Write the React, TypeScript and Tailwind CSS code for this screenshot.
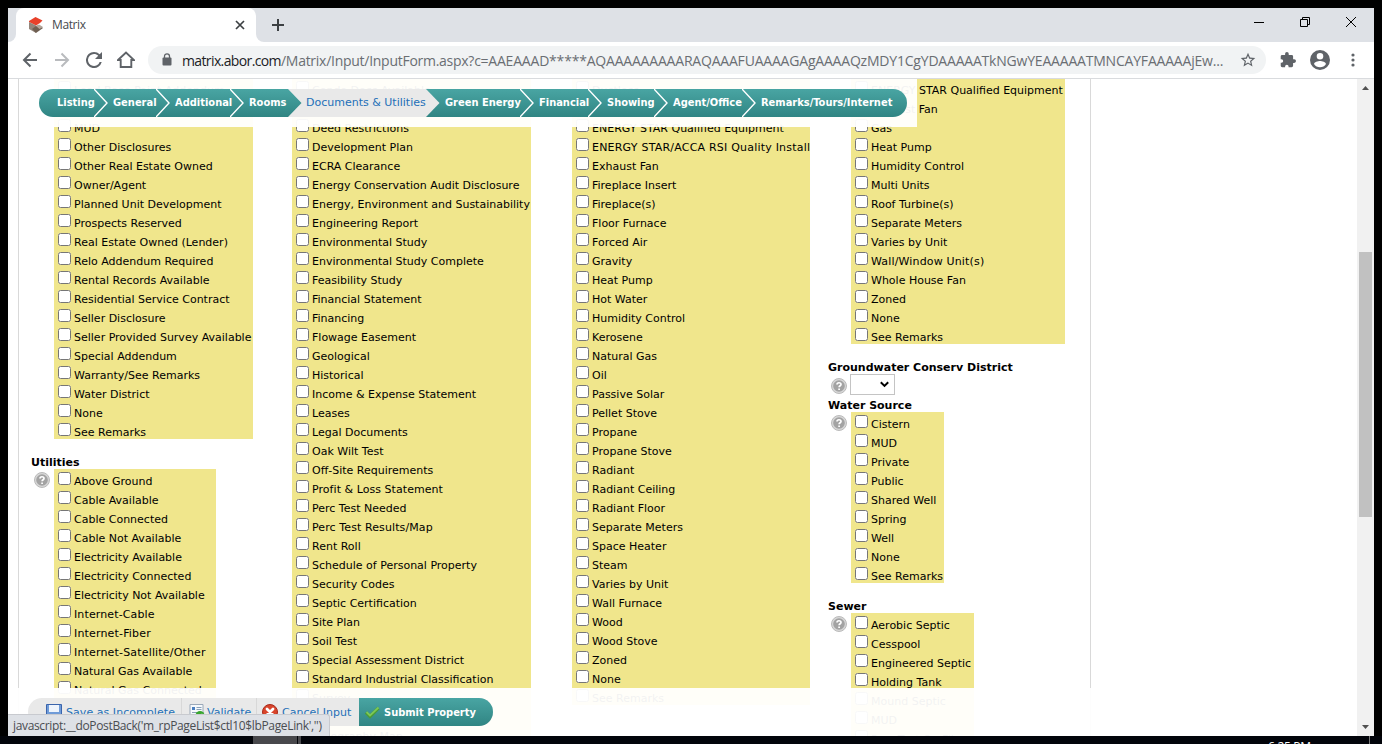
import React from "react";

const VERDANA = "font-['DejaVu_Sans',Verdana,sans-serif]";
const SEGOE = "font-['Open_Sans','Segoe_UI',sans-serif]";

const disclosures = [
  "Lead Base Paint Addendum", "Lead Paint Disclosure", "MUD", "Other Disclosures", "Other Real Estate Owned", "Owner/Agent",
  "Planned Unit Development", "Prospects Reserved", "Real Estate Owned (Lender)", "Relo Addendum Required",
  "Rental Records Available", "Residential Service Contract", "Seller Disclosure", "Seller Provided Survey Available",
  "Special Addendum", "Warranty/See Remarks", "Water District", "None", "See Remarks",
];
const utilities = [
  "Above Ground", "Cable Available", "Cable Connected", "Cable Not Available", "Electricity Available",
  "Electricity Connected", "Electricity Not Available", "Internet-Cable", "Internet-Fiber",
  "Internet-Satellite/Other", "Natural Gas Available", "Natural Gas Connected", "Natural Gas Not Available", "Other",
];
const documents = [
  "Condo Docs Available", "Covenants", "Deed Restrictions", "Development Plan", "ECRA Clearance",
  "Energy Conservation Audit Disclosure", "Energy, Environment and Sustainability", "Engineering Report",
  "Environmental Study", "Environmental Study Complete", "Feasibility Study", "Financial Statement", "Financing",
  "Flowage Easement", "Geological", "Historical", "Income & Expense Statement", "Leases", "Legal Documents",
  "Oak Wilt Test", "Off-Site Requirements", "Profit & Loss Statement", "Perc Test Needed", "Perc Test Results/Map",
  "Rent Roll", "Schedule of Personal Property", "Security Codes", "Septic Certification", "Site Plan", "Soil Test",
  "Special Assessment District", "Standard Industrial Classification", "Survey", "Title Report", "Topography Map",
];
const heating = [
  "Ductless", "Electric", "ENERGY STAR Qualified Equipment", "ENERGY STAR/ACCA RSI Quality Install", "Exhaust Fan",
  "Fireplace Insert", "Fireplace(s)", "Floor Furnace", "Forced Air", "Gravity", "Heat Pump", "Hot Water",
  "Humidity Control", "Kerosene", "Natural Gas", "Oil", "Passive Solar", "Pellet Stove", "Propane", "Propane Stove",
  "Radiant", "Radiant Ceiling", "Radiant Floor", "Separate Meters", "Space Heater", "Steam", "Varies by Unit",
  "Wall Furnace", "Wood", "Wood Stove", "Zoned", "None", "See Remarks",
];
const cooling = [
  "ENERGY STAR Qualified Equipment", "Exhaust Fan", "Gas", "Heat Pump", "Humidity Control", "Multi Units",
  "Roof Turbine(s)", "Separate Meters", "Varies by Unit", "Wall/Window Unit(s)", "Whole House Fan", "Zoned", "None",
  "See Remarks",
];
const water = ["Cistern", "MUD", "Private", "Public", "Shared Well", "Spring", "Well", "None", "See Remarks"];
const sewer = ["Aerobic Septic", "Cesspool", "Engineered Septic", "Holding Tank", "Mound Septic", "MUD", "Perc Test On File"];

// A few labels are set slightly wider than the rest.
const tracking: Record<string, string> = {
  "ENERGY STAR/ACCA RSI Quality Install": "tracking-[0.21px]",
  "Internet-Satellite/Other": "tracking-[0.17px]",
  "Internet-Cable": "tracking-[0.12px]",
  "Internet-Fiber": "tracking-[0.17px]",
  "Wall/Window Unit(s)": "tracking-[0.16px]",
  "Perc Test Results/Map": "tracking-[0.1px]",
  "Profit & Loss Statement": "tracking-[0.05px]",
};

function Help() {
  return (
    <svg width="16" height="16" viewBox="0 0 16 16" className="block">
      <circle cx="8" cy="8" r="7.5" fill="#d8d8d8" stroke="#b4b4b4" strokeWidth="0.9" />
      <circle cx="8" cy="8" r="5.8" fill="#a3a3a3" />
      <path d="M6 6.6C6 4.2 10 4.2 10 6.4 10 7.8 8.1 7.7 8.1 9.3M8.1 10.4v1.5" stroke="#fff" strokeWidth="1.7" fill="none" />
    </svg>
  );
}

function CheckList({ items, width, help }: { items: string[]; width: string; help?: boolean }) {
  return (
    <div className="flex">
      <div className="w-[23px] shrink-0 pl-[3px] pt-[3px]">{help && <Help />}</div>
      <ul className={`${width} shrink-0 bg-[#f0e68c]`}>
        {items.map((t) => (
          <li key={t} className="flex h-[19px] pl-1">
            <input type="checkbox" className="mt-[3px] h-[13px] w-[13px] shrink-0" />
            <span className={`ml-[3px] pt-[3px] text-[11px] leading-[19px] whitespace-nowrap ${tracking[t] ?? ""}`}>{t}</span>
          </li>
        ))}
      </ul>
    </div>
  );
}

function Heading({ children, className = "mt-[15px]" }: { children: string; className?: string }) {
  return <h3 className={`${className} h-[15px] text-[11px] leading-[17px] font-bold whitespace-nowrap`}>{children}</h3>;
}

const steps = [
  { t: "Listing", w: "w-[55px]" },
  { t: "General", w: "w-[62px]" },
  { t: "Additional", w: "w-[74px]" },
  { t: "Rooms", w: "w-[58px]" },
  { t: "Documents & Utilities", w: "w-[138px]", active: true },
  { t: "Green Energy", w: "w-[94px]", after: true },
  { t: "Financial", w: "w-[68px]" },
  { t: "Showing", w: "w-[66px]" },
  { t: "Agent/Office", w: "w-[88px]" },
  { t: "Remarks/Tours/Internet", w: "w-[165px]" },
];

function Steps() {
  return (
    <nav className="flex h-7 w-[868px] overflow-hidden rounded-full bg-linear-to-b from-[#49a5a3] to-[#308583]">
      {steps.map((s, i) => (
        <div key={s.t} className={`${s.w} flex shrink-0`}>
          {i === 0 ? (
            <div className="w-[18px] shrink-0" />
          ) : (
            <svg width="14" height="28" viewBox="0 0 14 28" className="mr-[5px] shrink-0">
              {s.active && <path d="M0 0H14V28H0L13.5 14Z" fill="#e9e9e9" />}
              {s.after && <path d="M0 0L13.5 14L0 28Z" fill="#e9e9e9" />}
              {!s.active && !s.after && <path d="M0 0L13 14L0 28" fill="none" stroke="#fff" strokeWidth="1.4" />}
            </svg>
          )}
          <span
            className={
              s.active
                ? "-ml-[5px] grow bg-[#e9e9e9] pl-1 text-[11px] leading-7 whitespace-nowrap text-[#2470b8]"
                : "font-['DejaVu_Sans_Condensed','DejaVu_Sans',sans-serif] text-[11px] leading-7 font-bold whitespace-nowrap text-white"
            }
          >
            {s.t}
          </span>
        </div>
      ))}
    </nav>
  );
}

function Actions() {
  return (
    <div className="flex h-7 w-[465px] overflow-hidden rounded-full bg-[#e9e9e9] text-[11px] leading-[29px] whitespace-nowrap text-[#2470b8]">
      <div className="flex w-[153px] pt-1.5 pl-[18px]">
        <svg width="16" height="16" viewBox="0 0 16 16">
          <path d="M.5.5h15v15h-14l-1-1z" fill="#6f9bd8" stroke="#3a64ac" />
          <path d="M3 1h10v7H3z" fill="#eef4fc" />
          <path d="M4 10h8v6H4z" fill="#dfe6f0" />
          <path d="M5 11h2v4H5z" fill="#2f5da8" />
        </svg>
        <span className="-mt-1.5 ml-1 tracking-[0.05px]">Save as Incomplete</span>
      </div>
      <div className="flex w-[75px] border-l border-[#d8d8d8] pt-1.5 pl-[7px]">
        <svg width="16" height="16" viewBox="0 0 16 16">
          <path d="M1 .5h13v15H1z" fill="#f6f9fc" stroke="#9aa8b8" />
          <path d="M3 3h3v3H3z" fill="#4a7fc0" />
          <path d="M7.500 3.500h5M7.500 5.500h5M3 8.500h6" stroke="#8aa0b8" />
          <circle cx="11" cy="11.500" r="4.500" fill="#39a52f" />
          <path d="M9 12l1.500 1.500L13.500 10" stroke="#fff" fill="none" strokeWidth="1.500" />
        </svg>
        <span className="-mt-1.5 ml-[2px]">Validate</span>
      </div>
      <div className="flex w-[103px] border-l border-[#d8d8d8] pt-1.5 pl-[5px]">
        <svg width="16" height="16" viewBox="0 0 16 16">
          <circle cx="8" cy="8" r="7.500" fill="#d8452c" stroke="#a8281a" />
          <path d="M5 5l6 6M11 5l-6 6" stroke="#fff" strokeWidth="2.800" strokeLinecap="round" />
        </svg>
        <span className="-mt-1.5 ml-[4px]">Cancel Input</span>
      </div>
      <div className="flex w-[134px] bg-linear-to-b from-[#49a5a3] to-[#308583] pl-[6px] font-bold text-white">
        <svg width="15" height="28" viewBox="0 0 15 28">
          <path d="M1 14.500L5 18.500L13.500 10" fill="none" stroke="#4a9a34" strokeWidth="3.200" />
          <path d="M1.500 14L5 17.500L13.500 9.500" fill="none" stroke="#7cc855" strokeWidth="1.800" />
        </svg>
        <span className="ml-1 font-['DejaVu_Sans_Condensed','DejaVu_Sans',sans-serif]">Submit Property</span>
      </div>
    </div>
  );
}

function TabStrip() {
  return (
    <div className="flex h-[34px] items-stretch bg-[#dee1e6]">
      <div className="flex w-2 items-end bg-white"><div className="h-full w-full rounded-br-lg bg-[#dee1e6]" /></div>
      <div className="flex w-[240px] items-center rounded-t-lg bg-white pl-3">
        <svg width="16" height="16" viewBox="0 0 16 16" className="shrink-0">
          <path d="M1 4L7.500 0L14.500 3.500L12 6L8 8.500L1 5Z" fill="#e8412a" />
          <path d="M1 5L8 8.500V16L1 12Z" fill="#93857a" />
          <path d="M8 9l3-1 4 3-7 5L4 12z" fill="#6f5f52" />
          <path d="M8 9l3-1.500 4 2.500-3.500 2z" fill="#b3a69b" />
        </svg>
        <span className="ml-2 grow text-[12px] tracking-[-0.4px] text-[#45494d]">Matrix</span>
        <svg width="10" height="10" viewBox="0 0 10 10" className="mr-[11px]">
          <path d="M1 1l8 8M9 1L1 9" stroke="#3c4043" strokeWidth="1.700" />
        </svg>
      </div>
      <div className="flex grow bg-white"><div className="flex grow items-center rounded-bl-lg bg-[#dee1e6] pl-4">
        <svg width="12" height="12" viewBox="0 0 12 12">
          <path d="M6 0v12M0 6h12" stroke="#3c4043" strokeWidth="2" />
        </svg>
        <div className="mr-[18px] mb-[6px] ml-auto flex items-center gap-[36px]">
          <svg width="10" height="10" viewBox="0 0 10 10"><path d="M0 5.500h10" stroke="#000" /></svg>
          <svg width="10" height="10" viewBox="0 0 10 10" fill="none" stroke="#000"><path d="M.5 2.500h7v7h-7zM2.500 2.500v-2h7v7h-2" /></svg>
          <svg width="10" height="10" viewBox="0 0 10 10"><path d="M0 0l10 10M10 0L0 10" stroke="#000" /></svg>
        </div>
      </div></div>
    </div>
  );
}

function Toolbar() {
  return (
    <div className="flex h-[37px] items-center border-b border-[#d9dbde] bg-white pl-[14px] text-[#6a6e73]">
      <svg width="16" height="16" viewBox="0 0 16 16" fill="none" stroke="#5f6368" strokeWidth="2"><path d="M15 8H2M8.500 1.500L2 8l6.500 6.500" /></svg>
      <svg width="16" height="16" viewBox="0 0 16 16" fill="none" stroke="#b9bbbe" strokeWidth="2" className="ml-4"><path d="M1 8h13M7.500 1.500L14 8l-6.500 6.500" /></svg>
      <svg width="16" height="16" viewBox="4 4 16 16" fill="#5f6368" className="ml-4"><path d="M17.650 6.350A7.958 7.958 0 0 0 12 4a8 8 0 1 0 7.730 10h-2.080A6 6 0 1 1 12 6c1.660 0 3.140.69 4.220 1.780L13 11h7V4l-2.350 2.350z" /></svg>
      <svg width="18" height="18" viewBox="0 0 18 18" fill="none" stroke="#5f6368" strokeWidth="1.900" className="ml-[15px]"><path d="M1 9L9 1.500L17 9H14.300V16H3.700V9Z" /></svg>
      <div className="ml-[13px] flex h-7 w-[1118px] items-center rounded-full bg-[#f1f3f4] pl-[14px]">
        <svg width="10" height="13" viewBox="0 0 10 13" className="mb-px shrink-0">
          <path d="M2.500 5V3.300a2.500 2.500 0 0 1 5 0V5" fill="none" stroke="#5f6368" strokeWidth="1.300" />
          <rect x="0.500" y="4.600" width="9" height="8" rx="1" fill="#5f6368" />
        </svg>
        <span className="ml-[10px] w-[1046px] text-[14px] whitespace-nowrap">
          <span className="tracking-[-0.62px] text-[#202124]">matrix.abor.com</span>
          <span className="tracking-[-0.27px]">/Matrix/Input/InputForm.aspx?c=</span>
          <span className="tracking-[-0.2px]">AAEAAAD*****AQAAAAAAAAARAQAAAFUAAAAGAgAAAAQzMDY1CgYDAAAAATkNGwYEAAAAATMNCAYFAAAAAjEw...</span>
        </span>
        <svg width="16" height="16" viewBox="1 1 22 22" fill="#5f6368" className="ml-[12px] shrink-0"><path d="M22 9.240l-7.190-.62L12 2 9.190 8.630 2 9.240l5.460 4.730L5.820 21 12 17.270 18.180 21l-1.630-7.030L22 9.240zM12 15.400l-3.760 2.270 1-4.280-3.320-2.880 4.380-.38L12 6.100l1.710 4.040 4.380.38-3.320 2.880 1 4.280L12 15.400z" /></svg>
      </div>
      <svg width="16" height="16" viewBox="1 1 22 22" fill="#5f6368" className="ml-[14px]"><path d="M20.500 11H19V7a2 2 0 0 0-2-2h-4V3.500a2.500 2.500 0 0 0-5 0V5H4a2 2 0 0 0-2 2v4h1a2.300 2.300 0 0 1 0 4.800H2V20a2 2 0 0 0 2 2h4v-1a2.300 2.300 0 0 1 4.800 0v1H17a2 2 0 0 0 2-2v-4h1.500a2.500 2.500 0 0 0 0-5z" /></svg>
      <svg width="20" height="20" viewBox="2 2 20 20" fill="#5f6368" className="ml-[14px]"><path d="M12 2a10 10 0 1 0 0 20 10 10 0 0 0 0-20zm0 3a3.300 3.300 0 1 1 0 6.600A3.300 3.300 0 0 1 12 5zm0 14.200a7.200 7.200 0 0 1-6-3.200c.03-2 4-3.100 6-3.100s5.970 1.100 6 3.100a7.200 7.200 0 0 1-6 3.200z" /></svg>
      <svg width="4" height="14" viewBox="0 0 4 14" fill="#5f6368" className="ml-[21px]"><circle cx="2" cy="2" r="1.600" /><circle cx="2" cy="7" r="1.600" /><circle cx="2" cy="12" r="1.600" /></svg>
    </div>
  );
}

export default function App() {
  return (
    <div className={`h-[744px] w-[1382px] overflow-hidden bg-black pt-2 ${SEGOE}`}>
      <div className="ml-2 flex h-[728px] w-[1366px] flex-col overflow-hidden bg-white">
        <TabStrip />
        <Toolbar />
        <div className="relative flex h-[657px] overflow-hidden">
          <main className={`ml-[10px] flex h-[657px] w-[1073px] overflow-hidden border-x border-[#d9d9d9] pl-3 text-black ${VERDANA}`}>
            <section className="-mt-px w-[238px] shrink-0">
              <CheckList items={disclosures} width="w-[199px]" />
              <Heading>Utilities</Heading>
              <CheckList items={utilities} width="w-[162px]" help />
            </section>
            <section className="-mt-px w-[280px] shrink-0">
              <CheckList items={documents} width="w-[239px]" />
            </section>
            <section className="-mt-px w-[279px] shrink-0">
              <CheckList items={heating} width="w-[238px]" />
            </section>
            <section className="-mt-px shrink-0">
              <CheckList items={cooling} width="w-[214px]" />
              <Heading>Groundwater Conserv District</Heading>
              <div className="flex h-[23px] pl-[3px]">
                <div className="pt-1"><Help /></div>
                <button className="ml-[3px] flex h-[21px] w-[45px] items-center justify-end border border-[#c4c4c4] bg-white pr-[5px]">
                  <svg width="9" height="7" viewBox="0 0 9 7"><path d="M.8 1.200L4.500 4.900L8.200 1.200" fill="none" stroke="#000" strokeWidth="2" /></svg>
                </button>
              </div>
              <Heading className="">Water Source</Heading>
              <CheckList items={water} width="w-[93px]" help />
              <Heading>Sewer</Heading>
              <CheckList items={sewer} width="w-[123px]" help />
            </section>
          </main>
          <div className="ml-auto flex w-[17px] flex-col items-center bg-[#f1f1f1]">
            <svg width="17" height="17" viewBox="0 0 17 17"><path d="M5 11L8.500 7L12 11Z" fill="#505050" /></svg>
            <div className="mt-[156px] h-[265px] w-[13px] bg-[#c1c1c1]" />
            <svg width="17" height="17" viewBox="0 0 17 17" className="mt-auto"><path d="M5 6L8.500 10L12 6Z" fill="#505050" /></svg>
          </div>
          <div className={`absolute top-0 left-[23px] h-12 w-[886px] bg-white/95 pt-[10px] pl-2 ${VERDANA}`}>
            <Steps />
          </div>
          <div className={`absolute bottom-0 left-0 h-12 w-[1349px] bg-white/95 pt-[10px] pl-5 ${VERDANA}`}>
            <Actions />
          </div>
          <div className="absolute bottom-0 left-0 h-[22px] w-[322px] rounded-tr-[3px] border-t border-r border-[#c8cacf] bg-[#dee1e6] pl-[5px] text-[12px] leading-[22px] tracking-[-0.35px] whitespace-nowrap text-[#4a4d52]">
            javascript:__doPostBack('m_rpPageList$ctl10$lbPageLink','')
          </div>
        </div>
      </div>
      <div className="flex h-2 w-[1382px] overflow-hidden bg-[#02040a]">
        <div className="ml-[253px] h-2 w-[44px] bg-[#48484c]" />
        <div className="ml-px h-2 w-[3px] bg-[#48484c]" />
        <span className="ml-[967px] w-[101px] pt-[3px] text-[12px] leading-[16px] tracking-[-0.3px] whitespace-nowrap text-white">6:25 PM</span>
        <div className="h-2 w-px bg-[#777]" />
      </div>
    </div>
  );
}
